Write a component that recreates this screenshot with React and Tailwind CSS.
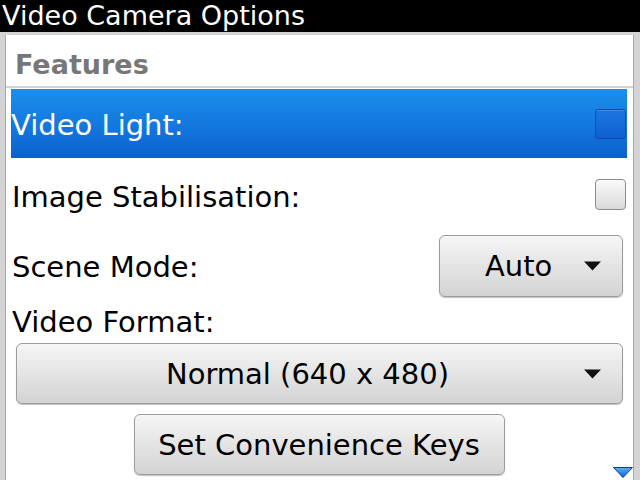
import React from "react";

const font = { fontFamily: '"DejaVu Sans", Verdana, sans-serif' };

function Arrow() {
  return (
    <svg width="17" height="10" viewBox="0 0 17 10" className="shrink-0">
      <polygon points="0,0.5 17,0.5 8.5,9.5" fill="#111" />
    </svg>
  );
}

function Checkbox({ focused }) {
  return focused ? (
    <div className="w-[31px] h-[30px] rounded-[3px] border border-[#0b4aa6] bg-[linear-gradient(180deg,#1d77e0_0%,#0f5fd2_100%)] shadow-[inset_0_1px_0_rgba(255,255,255,0.15)]" />
  ) : (
    <div className="w-[31px] h-[31px] rounded-[4px] border-[1.5px] border-[#8c8c8c] bg-[linear-gradient(180deg,#fafafa_0%,#d9d9d9_100%)]" />
  );
}

export default function App() {
  return (
    <div style={font} className="w-[640px] h-[480px] overflow-hidden flex flex-col bg-[#d4d4d4]">
      {/* Title bar */}
      <div className="h-[32px] shrink-0 bg-black text-white text-[27px] leading-[32px] pl-[2px] whitespace-nowrap">
        Video Camera Options
      </div>

      <div className="flex-1 flex pt-[3px] pl-[5px] pr-[6px]">
        <div className="relative flex-1 flex flex-col bg-white border-l border-r border-[#a8a8a8]">
          {/* Group header */}
          <div className="h-[51px] shrink-0 pt-[15px] pl-[9px] text-[27px] leading-[30px] font-bold text-[#777777]">
            Features
          </div>
          <div className="h-[2px] shrink-0 bg-[#d2d2d2]" />
          <div className="h-[1px] shrink-0" />

          {/* Focused row */}
          <div className="ml-[5px] mr-[6px] h-[69px] shrink-0 flex items-center justify-between pt-[3px] bg-[linear-gradient(180deg,#1a8eea_0%,#1479e0_50%,#0b60cf_100%)]">
            <span className="text-[29px] leading-[32px] text-white">Video Light:</span>
            <div className="mr-[1px] -mt-[3px]">
              <Checkbox focused />
            </div>
          </div>

          {/* Image Stabilisation */}
          <div className="ml-[6px] mr-[6px] h-[73px] shrink-0 flex items-center justify-between">
            <span className="text-[29px] leading-[32px] text-black pt-[4px]">Image Stabilisation:</span>
            <div className="mr-[1px]">
              <Checkbox />
            </div>
          </div>

          {/* Scene Mode */}
          <div className="ml-[6px] mr-[10px] h-[69px] shrink-0 flex items-center justify-between">
            <span className="text-[29px] leading-[32px] text-black pt-[2px]">Scene Mode:</span>
            <div className="w-[184px] h-[62px] flex items-center justify-between pl-[45px] pr-[21px] rounded-[6px] border border-[#9c9c9c] bg-[linear-gradient(180deg,#f6f6f6_0%,#e4e4e4_50%,#d3d3d3_100%)] shadow-[0_1px_1px_rgba(0,0,0,0.25)]">
              <span className="text-[29px] leading-[32px] text-black">Auto</span>
              <Arrow />
            </div>
          </div>

          {/* Video Format */}
          <div className="ml-[6px] h-[32px] mt-[6px] shrink-0 text-[29px] leading-[32px] text-black">
            Video Format:
          </div>
          <div className="mt-[5px] ml-[10px] mr-[10px] h-[61px] shrink-0 flex items-center rounded-[6px] border border-[#9c9c9c] bg-[linear-gradient(180deg,#f6f6f6_0%,#e4e4e4_50%,#d3d3d3_100%)] shadow-[0_1px_1px_rgba(0,0,0,0.25)] pr-[21px]">
            <span className="flex-1 text-center text-[29px] leading-[32px] text-black pl-[14px]">Normal (640 x 480)</span>
            <Arrow />
          </div>

          {/* Button */}
          <div className="mt-[10px] flex justify-center">
            <div className="ml-[-1px] w-[371px] h-[61px] flex items-center justify-center rounded-[6px] border border-[#9c9c9c] bg-[linear-gradient(180deg,#f6f6f6_0%,#e4e4e4_50%,#d3d3d3_100%)] shadow-[0_1px_1px_rgba(0,0,0,0.25)] text-[29px] leading-[32px] text-black">
              Set Convenience Keys
            </div>
          </div>

          {/* Scroll indicator */}
          <svg width="20" height="11" viewBox="0 0 20 11" className="absolute right-[0px] bottom-[2px]">
            <defs>
              <linearGradient id="sg" x1="0" y1="0" x2="0" y2="1">
                <stop offset="0" stopColor="#5db3f5" />
                <stop offset="1" stopColor="#0a5fcf" />
              </linearGradient>
            </defs>
            <polygon points="0.5,0.5 19.5,0.5 10,10.5" fill="url(#sg)" stroke="#0a3f8a" strokeWidth="1" />
          </svg>
        </div>
      </div>
    </div>
  );
}
